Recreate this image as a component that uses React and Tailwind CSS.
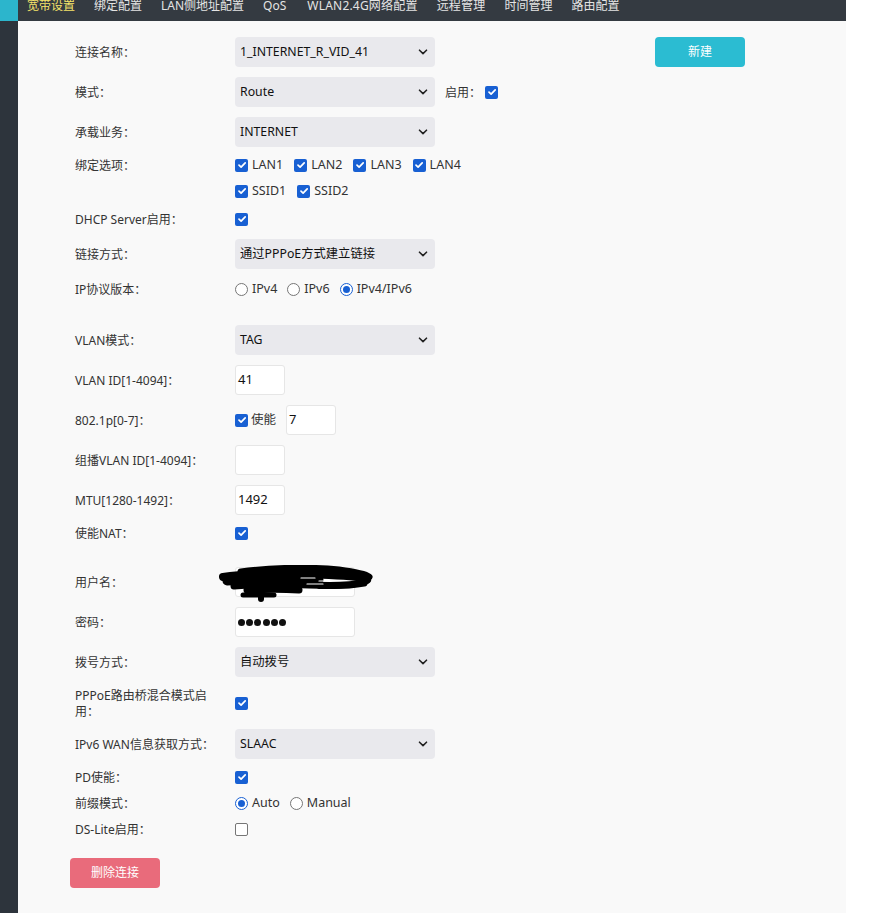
import React from "react";

const FONT = { fontFamily: '"Noto Sans", "Noto Sans CJK SC", sans-serif' };

function Chevron() {
  return (
    <svg width="10" height="6" viewBox="0 0 10 6" className="absolute right-[7px] top-1/2 -translate-y-1/2">
      <path d="M1.5 1.2 L5 4.6 L8.5 1.2" fill="none" stroke="#222" strokeWidth="1.6" strokeLinecap="round" strokeLinejoin="round" />
    </svg>
  );
}

function Select({ value }) {
  return (
    <div className="relative w-[200px] h-[30px] rounded-[4px] bg-[#e9e9ed] flex items-center pl-[5px] text-[12.3px] text-[#111]">
      {value}
      <Chevron />
    </div>
  );
}

function Check({ checked = true }) {
  if (!checked)
    return <span className="inline-block w-[13px] h-[13px] rounded-[2px] border border-[#767676] bg-white shrink-0" />;
  return (
    <span className="inline-flex items-center justify-center w-[13px] h-[13px] rounded-[2px] bg-[#1860d3] shrink-0">
      <svg width="10" height="10" viewBox="0 0 10 10">
        <path d="M2 5.2 L4.1 7.2 L8.2 2.8" fill="none" stroke="#fff" strokeWidth="1.7" strokeLinecap="round" strokeLinejoin="round" />
      </svg>
    </span>
  );
}

function Radio({ checked }) {
  if (checked)
    return (
      <span className="inline-flex items-center justify-center w-[13px] h-[13px] rounded-full border-[1.5px] border-[#1860d3] bg-white shrink-0">
        <span className="w-[7px] h-[7px] rounded-full bg-[#1860d3]" />
      </span>
    );
  return <span className="inline-block w-[13px] h-[13px] rounded-full border border-[#767676] bg-white shrink-0" />;
}

function TextBox({ value, w = "w-[50px]" }) {
  return (
    <div className={`${w} h-[30px] rounded-[3px] bg-white border border-[#e6e6e6] flex items-center pl-[2px] text-[13px] text-[#111]`}>
      {value}
    </div>
  );
}

function Label({ children }) {
  return <div className="w-[142px] mr-[18px] shrink-0 text-[12px] leading-[16px] text-[#333] translate-y-[1px]">{children}</div>;
}

function CheckItem({ text }) {
  return (
    <span className="flex items-center gap-[4px] mr-[11px] text-[12.5px] text-[#333]">
      <Check />
      {text}
    </span>
  );
}

function RadioItem({ text, checked }) {
  return (
    <span className="flex items-center gap-[4px] mr-[10px] text-[12.5px] text-[#333]">
      <Radio checked={checked} />
      {text}
    </span>
  );
}

const NAV = ["宽带设置", "绑定配置", "LAN侧地址配置", "QoS", "WLAN2.4G网络配置", "远程管理", "时间管理", "路由配置"];

export default function App() {
  return (
    <div className="w-[894px] min-h-[913px] bg-white flex" style={FONT}>
      <div className="w-[18px] shrink-0 bg-[#2d343c] flex flex-col">
        <div className="h-[21px] bg-[#2cb5cc]" />
      </div>
      <div className="w-[828px] flex flex-col bg-[#f9f9f9]">
        <div className="h-[21px] bg-[#343a41] overflow-hidden flex">
          <div className="flex mt-[-3px] pl-[9px] leading-[18px] text-[12px]">
            {NAV.map((n, i) => (
              <span key={n} className={`${i === 0 ? "text-[#f6e46a]" : "text-[#e4e4e4]"} mr-[19px] ${i === 3 ? "mr-[21px]" : ""} ${i >= 4 && i <= 5 ? "tracking-[0.2px]" : ""}`}>{n}</span>
            ))}
          </div>
        </div>

        <div className="flex flex-col pl-[57px] pb-[25px]">
          <div className="mt-[16px] h-[30px] flex items-center">
            <Label>连接名称：</Label>
            <Select value="1_INTERNET_R_VID_41" />
            <button className="ml-[220px] w-[90px] h-[30px] rounded-[4px] bg-[#2bbcd2] text-white text-[12px]">新建</button>
          </div>
          <div className="mt-[10px] h-[30px] flex items-center">
            <Label>模式：</Label>
            <Select value="Route" />
            <span className="ml-[10px] text-[12px] text-[#333] mr-[4px] translate-y-[1px]">启用：</span>
            <Check />
          </div>
          <div className="mt-[10px] h-[30px] flex items-center">
            <Label>承载业务：</Label>
            <Select value="INTERNET" />
          </div>
          <div className="mt-[5px] h-[26px] flex items-center">
            <Label>绑定选项：</Label>
            <CheckItem text="LAN1" />
            <CheckItem text="LAN2" />
            <CheckItem text="LAN3" />
            <CheckItem text="LAN4" />
          </div>
          <div className="h-[26px] flex items-center">
            <Label></Label>
            <CheckItem text="SSID1" />
            <CheckItem text="SSID2" />
          </div>
          <div className="mt-[2px] h-[26px] flex items-center">
            <Label>DHCP Server启用：</Label>
            <Check />
          </div>
          <div className="mt-[7px] h-[30px] flex items-center">
            <Label>链接方式：</Label>
            <Select value="通过PPPoE方式建立链接" />
          </div>
          <div className="mt-[7px] h-[26px] flex items-center">
            <Label>IP协议版本：</Label>
            <RadioItem text="IPv4" />
            <RadioItem text="IPv6" />
            <RadioItem text="IPv4/IPv6" checked />
          </div>
          <div className="mt-[23px] h-[30px] flex items-center">
            <Label>VLAN模式：</Label>
            <Select value="TAG" />
          </div>
          <div className="mt-[10px] h-[30px] flex items-center">
            <Label>VLAN ID[1-4094]：</Label>
            <TextBox value="41" />
          </div>
          <div className="mt-[10px] h-[30px] flex items-center">
            <Label>802.1p[0-7]：</Label>
            <span className="flex items-center gap-[3px] text-[12.5px] text-[#333] mr-[10px]">
              <Check />
              使能
            </span>
            <TextBox value="7" />
          </div>
          <div className="mt-[10px] h-[30px] flex items-center">
            <Label>组播VLAN ID[1-4094]：</Label>
            <TextBox value="" />
          </div>
          <div className="mt-[10px] h-[30px] flex items-center">
            <Label>MTU[1280-1492]：</Label>
            <TextBox value="1492" />
          </div>
          <div className="mt-[5px] h-[26px] flex items-center">
            <Label>使能NAT：</Label>
            <Check />
          </div>
          <div className="mt-[21px] h-[30px] flex items-center">
            <Label>用户名：</Label>
            <div className="relative">
              <TextBox value="" w="w-[120px]" />
              <svg width="160" height="40" viewBox="0 0 160 40" className="absolute left-[-16px] top-[-2px]">
                <g fill="none" stroke="#000" strokeLinecap="round" strokeLinejoin="round">
                  <path d="M22 7 C50 3 90 2 120 5 C135 7 146 9 150 12" strokeWidth="7" />
                  <path d="M4 12 C30 8 70 8 110 10 C130 11 145 12 148 15" strokeWidth="8" />
                  <path d="M8 16 C40 14 70 14 100 15" strokeWidth="9" />
                  <path d="M15 21 C40 19 70 19 90 20 C115 21 135 20 145 18" strokeWidth="7" />
                  <path d="M28 25 C45 24 65 24 80 25" strokeWidth="7" />
                  <path d="M24 30 L55 30" strokeWidth="5" />
                  <path d="M42 26 L42 34" strokeWidth="6" />
                  <path d="M100 22 C120 22 135 21 142 19" strokeWidth="4" />
                </g>
                <g fill="none" stroke="#fff" strokeWidth="1.2" strokeLinecap="round">
                  <path d="M82 13 L96 13" />
                  <path d="M100 16 L112 16" />
                  <path d="M88 19 L104 19" />
                </g>
              </svg>
            </div>
          </div>
          <div className="mt-[10px] h-[30px] flex items-center">
            <Label>密码：</Label>
            <div className="w-[120px] h-[30px] rounded-[3px] bg-white border border-[#e6e6e6] flex items-center pl-[2px] gap-[1.2px]">
              {[0, 1, 2, 3, 4, 5].map((i) => (
                <span key={i} className="w-[7px] h-[7px] rounded-full bg-[#111]" />
              ))}
            </div>
          </div>
          <div className="mt-[10px] h-[30px] flex items-center">
            <Label>拨号方式：</Label>
            <Select value="自动拨号" />
          </div>
          <div className="mt-[9px] h-[34px] flex items-center">
            <Label>PPPoE路由桥混合模式启用：</Label>
            <Check />
          </div>
          <div className="mt-[9px] h-[30px] flex items-center">
            <Label>IPv6 WAN信息获取方式：</Label>
            <Select value="SLAAC" />
          </div>
          <div className="mt-[5px] h-[26px] flex items-center">
            <Label>PD使能：</Label>
            <Check />
          </div>
          <div className="h-[26px] flex items-center">
            <Label>前缀模式：</Label>
            <RadioItem text="Auto" checked />
            <RadioItem text="Manual" />
          </div>
          <div className="h-[26px] flex items-center">
            <Label>DS-Lite启用：</Label>
            <Check checked={false} />
          </div>
          <div className="mt-[16px] ml-[-5px]">
            <button className="w-[90px] h-[30px] rounded-[4px] bg-[#e96b7b] text-white text-[12px]">删除连接</button>
          </div>
        </div>
      </div>
    </div>
  );
}
